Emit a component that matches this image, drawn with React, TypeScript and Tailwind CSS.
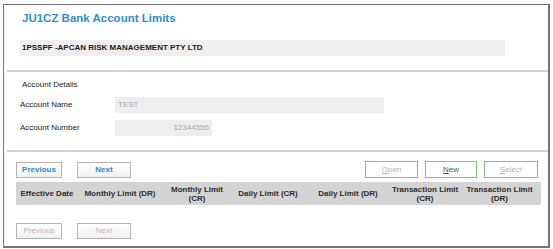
import React from 'react'

const font = { fontFamily: '"Liberation Sans", Arial, sans-serif' }

const NavButton: React.FC<{ label: string; disabled?: boolean; w: string }> = ({ label, disabled, w }) => (
  <button
    className={`${w} h-[16px] block border border-[#b4b4b4] bg-gradient-to-b from-white to-[#f1f1f1] text-[8px] leading-none ${
      disabled ? 'text-[#b9b9b9]' : 'text-[#2a8bd0] font-bold'
    }`}
  >
    {label}
  </button>
)

const ActionButton: React.FC<{ first: string; rest: string; disabled?: boolean; w: string }> = ({ first, rest, disabled, w }) => (
  <button
    className={`${w} h-[17px] block border border-[#7cc47c] bg-white text-[8px] leading-none ${
      disabled ? 'text-[#b5b5b5]' : 'text-[#3f5f3f]'
    }`}
  >
    <span className="underline">{first}</span>
    {rest}
  </button>
)

export default function App() {
  const columns = [
    { w: 'w-[62px]', lines: ['Effective Date'] },
    { w: 'w-[84px]', lines: ['Monthly Limit (DR)'] },
    { w: 'w-[70px]', lines: ['Monthly Limit', '(CR)'] },
    { w: 'w-[72px]', lines: ['Daily Limit (CR)'] },
    { w: 'w-[88px]', lines: ['Daily Limit (DR)'] },
    { w: 'w-[66px]', lines: ['Transaction Limit', '(CR)'] },
    { w: 'w-[83px]', lines: ['Transaction Limit', '(DR)'] },
  ]

  return (
    <div className="w-[553px] h-[249px] bg-white pt-[4px] pl-[3px]" style={font}>
      <div className="w-[547px] h-[244px] border border-r-2 border-b-2 border-[#767676] flex flex-col">
        {/* header */}
        <div className="h-[65px] shrink-0 pt-[6px]">
          <div className="pl-[18px] text-[11.5px] leading-[15px] font-bold text-[#2b8fd3]">JU1CZ Bank Account Limits</div>
          <div className="mt-[14px] ml-[16px] w-[485px] h-[16px] bg-[#efefef] flex items-center pl-[2px] text-[8px] font-bold text-[#1c1c1c]">
            1PSSPF -APCAN RISK MANAGEMENT PTY LTD
          </div>
        </div>
        <div className="shrink-0 ml-[3px] h-[2px] bg-[#d2d2d2]" />

        {/* account details */}
        <div className="h-[78px] shrink-0 pt-[8px] text-[8px] text-[#222]">
          <div className="pl-[18px] leading-[10px]">Account Details</div>
          <div className="mt-[7px] flex items-center">
            <div className="w-[111px] pl-[16px]">Account Name</div>
            <div className="w-[269px] h-[16px] bg-[#eeeeee] flex items-center pl-[3px] text-[#a8a8a8]">TEST</div>
          </div>
          <div className="mt-[7px] flex items-center">
            <div className="w-[111px] pl-[16px]">Account Number</div>
            <div className="w-[97px] h-[16px] bg-[#eeeeee] flex items-center justify-end pr-[3px] text-[#a8a8a8]">12344556</div>
          </div>
        </div>
        <div className="shrink-0 ml-[3px] h-[2px] bg-[#d2d2d2]" />

        {/* grid */}
        <div className="pt-[9px] pl-[12px]">
          <div className="flex items-center w-[525px] h-[17px]">
            <div className="flex gap-[15px]">
              <NavButton label="Previous" w="w-[46px]" />
              <NavButton label="Next" w="w-[54px]" />
            </div>
            <div className="ml-auto mr-[3px] flex gap-[7px]">
              <ActionButton first="O" rest="pen" disabled w="w-[53px]" />
              <ActionButton first="N" rest="ew" w="w-[52px]" />
              <ActionButton first="S" rest="elect" disabled w="w-[54px]" />
            </div>
          </div>
          <div className="mt-[4px] w-[525px] h-[23px] bg-[#d4d4d4] flex items-center text-[8px] font-bold text-[#2e2e2e] leading-[9px]">
            {columns.map((c, i) => (
              <div key={i} className={`${c.w} text-center whitespace-nowrap`}>
                {c.lines.map((l, j) => (
                  <div key={j}>{l}</div>
                ))}
              </div>
            ))}
          </div>
          <div className="mt-[18px] flex gap-[15px]">
            <NavButton label="Previous" disabled w="w-[46px]" />
            <NavButton label="Next" disabled w="w-[54px]" />
          </div>
        </div>
      </div>
    </div>
  )
}
